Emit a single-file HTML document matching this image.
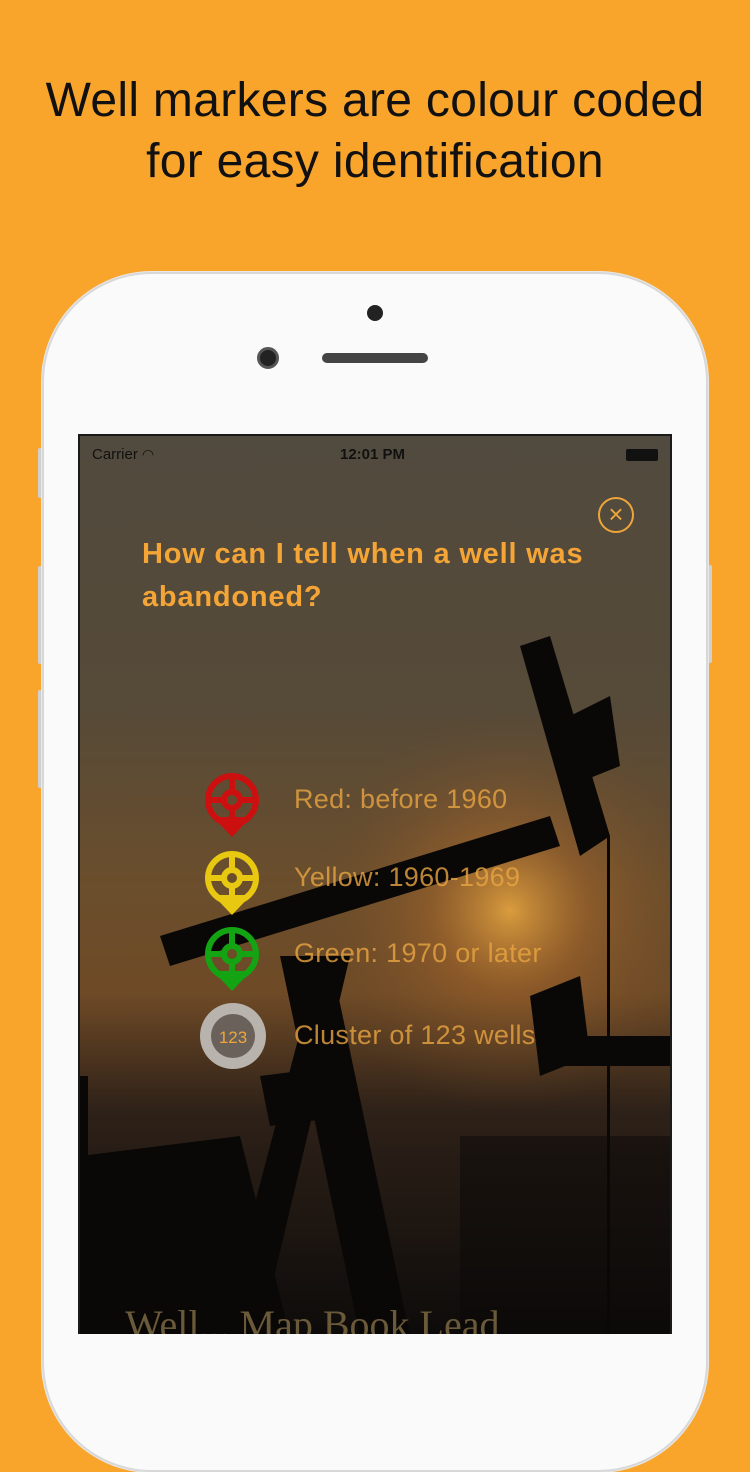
<!DOCTYPE html>
<html><head><meta charset="utf-8"><style>
*{margin:0;padding:0;box-sizing:border-box}
body{width:750px;height:1334px;overflow:hidden;background:#f9a42b;font-family:"Liberation Sans",sans-serif;position:relative}
.h{position:absolute;left:0;width:750px;text-align:center;font-size:48px;color:#111;line-height:61px;top:70px;letter-spacing:.3px}
.phone{position:absolute;left:42px;top:272px;width:666px;height:1200px;background:#fafafa;border-radius:110px;border:2px solid #d8d8d8;box-shadow:0 0 0 1px #e8e8e8}
.btn{position:absolute;background:#d0d0d0;width:5px;border-radius:2px}
.screen{position:absolute;left:78px;top:434px;width:594px;height:900px;background:#000;border:2px solid #1a1a1a;border-bottom:none;overflow:hidden}
.t{position:absolute;color:#e9a542;font-size:27px;opacity:.8;letter-spacing:.3px}
</style></head><body>
<div class="h">Well markers are colour coded<br>for easy identification</div>
<div class="btn" style="left:38px;top:448px;height:50px"></div>
<div class="btn" style="left:38px;top:566px;height:98px"></div>
<div class="btn" style="left:38px;top:690px;height:98px"></div>
<div class="btn" style="left:707px;top:565px;height:98px"></div>
<div class="phone"></div>
<div style="position:absolute;left:367px;top:305px;width:16px;height:16px;border-radius:50%;background:#222"></div>
<div style="position:absolute;left:257px;top:347px;width:22px;height:22px;border-radius:50%;background:#222;border:3px solid #555"></div>
<div style="position:absolute;left:322px;top:353px;width:106px;height:10px;border-radius:5px;background:#444"></div>
<div class="screen">
<svg width="594" height="900" style="position:absolute;left:0;top:0">
<defs>
<linearGradient id="g" x1="0" y1="0" x2="0" y2="1">
<stop offset="0" stop-color="#514a3e"/><stop offset=".3" stop-color="#564a38"/><stop offset=".5" stop-color="#6b4e2c"/><stop offset=".62" stop-color="#6e4a26"/><stop offset=".75" stop-color="#2e2118"/><stop offset="1" stop-color="#0d0b0a"/></linearGradient>
<radialGradient id="s" cx="430" cy="475" r="200" gradientUnits="userSpaceOnUse"><stop offset="0" stop-color="#e6a540" stop-opacity=".9"/><stop offset=".4" stop-color="#a8672a" stop-opacity=".5"/><stop offset="1" stop-color="#6b4a2a" stop-opacity="0"/></radialGradient>
</defs>
<rect width="594" height="900" fill="url(#g)"/>
<rect width="594" height="900" fill="url(#s)"/>
<g fill="#0a0807">
<polygon points="80,500 470,380 480,410 90,530"/>
<polygon points="440,210 470,200 530,400 500,420"/>
<polygon points="470,290 530,260 540,330 490,350"/>
<polygon points="200,520 250,520 330,900 280,900"/>
<polygon points="240,520 270,520 180,900 140,900"/>
<polygon points="0,720 160,700 210,900 0,900"/>
<polygon points="180,640 260,630 270,680 190,690"/>
<polygon points="450,560 500,540 510,620 460,640"/>
<rect x="460" y="600" width="130" height="30"/>
<rect x="0" y="640" width="8" height="260"/>
<rect x="380" y="700" width="214" height="200" opacity=".5"/>
<rect x="527" y="400" width="3" height="500"/>
</g>
<text x="45" y="902" fill="#6b5a3a" font-size="40" font-family="Liberation Serif">Well...  Map  Book  Lead</text>
</svg>
<div style="position:absolute;left:12px;top:10px;font-size:15px;color:#111">Carrier <span style="font-size:14px">&#x25E0;</span></div>
<div style="position:absolute;left:260px;top:10px;font-size:15px;color:#111;font-weight:bold">12:01 PM</div>
<div style="position:absolute;left:546px;top:13px;width:32px;height:12px;background:#111;border-radius:2px"></div>
<div style="position:absolute;left:518px;top:61px;width:36px;height:36px;border:2px solid #eea63a;border-radius:50%;color:#eea63a;font-size:26px;line-height:31px;text-align:center;font-weight:300">×</div>
<div style="position:absolute;left:62px;top:97px;font-size:29px;font-weight:bold;color:#f4a535;line-height:43px;letter-spacing:.8px">How can I tell when a well was<br>abandoned?</div>
<svg width="594" height="900" style="position:absolute;left:0;top:0">
<g transform="translate(152,364)">
<path d="M0,37 L-19,17 L19,17Z" fill="#cc1010"/>
<g fill="none" stroke="#cc1010" stroke-width="6"><circle r="24"/><circle r="8"/><path d="M0,-24V-8M0,8V24M-24,0H-8M8,0H24"/></g></g>
<g transform="translate(152,442)">
<path d="M0,37 L-19,17 L19,17Z" fill="#e8c810"/>
<g fill="none" stroke="#e8c810" stroke-width="6"><circle r="24"/><circle r="8"/><path d="M0,-24V-8M0,8V24M-24,0H-8M8,0H24"/></g></g>
<g transform="translate(152,518)">
<path d="M0,37 L-19,17 L19,17Z" fill="#13a313"/>
<g fill="none" stroke="#13a313" stroke-width="6"><circle r="24"/><circle r="8"/><path d="M0,-24V-8M0,8V24M-24,0H-8M8,0H24"/></g></g>
<circle cx="153" cy="600" r="33" fill="#b9b3ad"/><circle cx="153" cy="600" r="22" fill="#6a625a"/>
<text x="153" y="607" text-anchor="middle" fill="#eea63a" font-size="17" font-family="Liberation Sans">123</text>
</svg>
<div class="t" style="left:214px;top:348px">Red: before 1960</div>
<div class="t" style="left:214px;top:426px">Yellow: 1960-1969</div>
<div class="t" style="left:214px;top:502px">Green: 1970 or later</div>
<div class="t" style="left:214px;top:584px">Cluster of 123 wells</div>
</div>
</body></html>
